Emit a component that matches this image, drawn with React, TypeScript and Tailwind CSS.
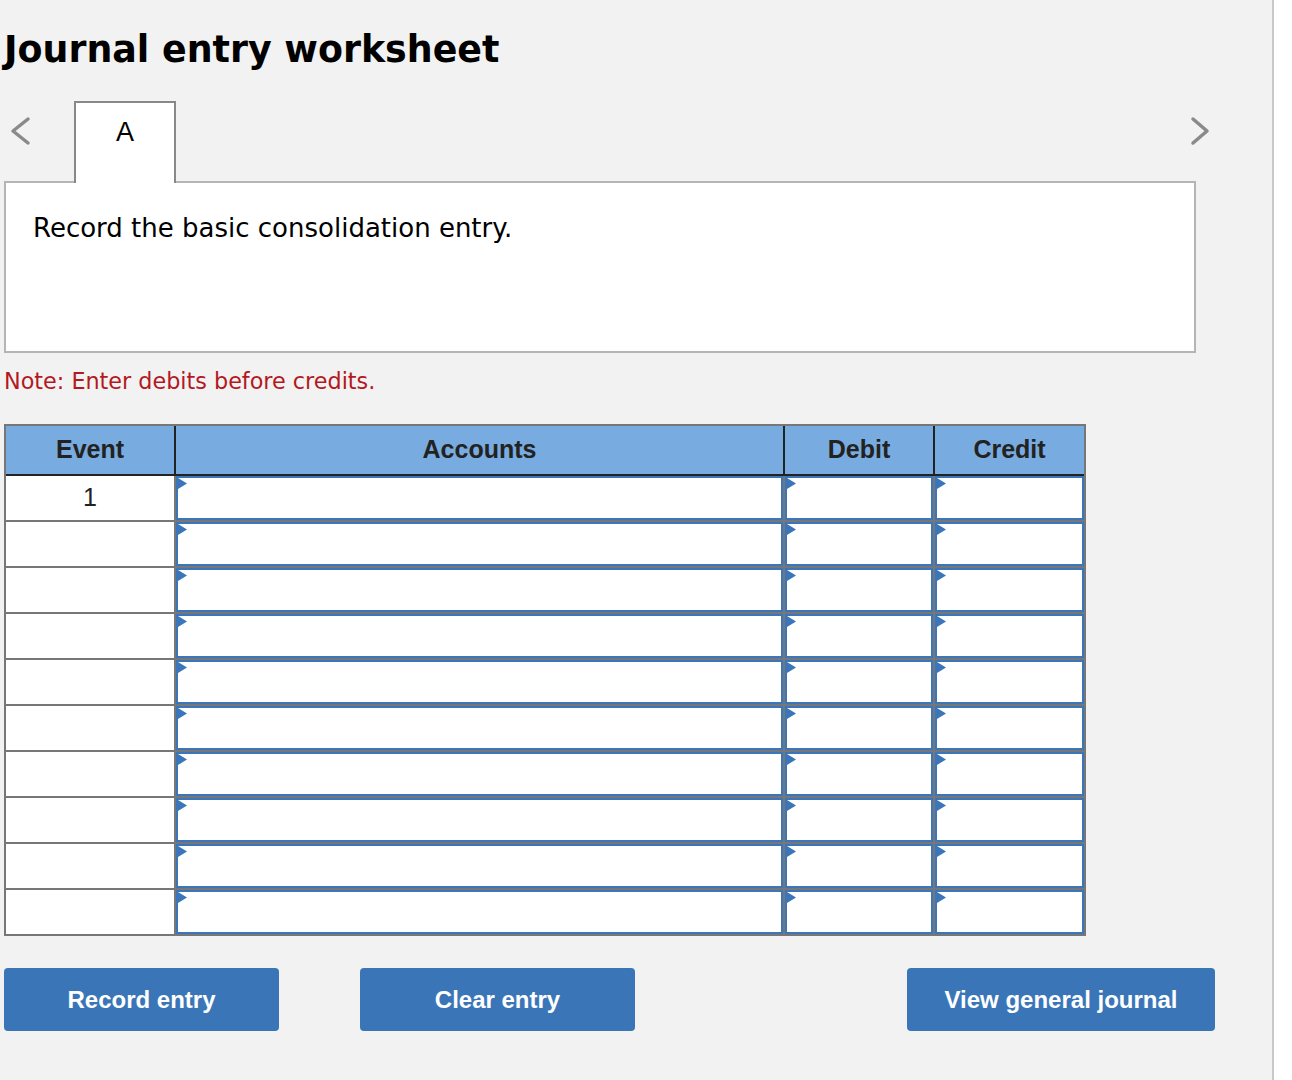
const verdana = "font-['Verdana','DejaVu_Sans',sans-serif]";
const arial = "font-['Liberation_Sans','Arial',sans-serif]";

const ROWS = 10;

function Flag() {
  return (
    <svg className="absolute left-0 top-0" width="9" height="11" viewBox="0 0 9 11">
      <polygon points="0,0 9,5.5 0,11" fill="#3a76b9" />
    </svg>
  );
}

function InputCell({ width, last }: { width: string; last?: boolean }) {
  return (
    <div className={`${width} h-full ${last ? "" : "border-r-2 border-[#777]"}`}>
      <div className="relative h-full w-full border-2 border-[#3a76b9] bg-white">
        <Flag />
      </div>
    </div>
  );
}

export default function App() {
  return (
    <div className="flex min-h-[1080px] w-full bg-white">
      <div className="w-[1274px] shrink-0 border-r-2 border-[#c8c8c8] bg-[#f2f2f2] pl-[4px] pt-[29px]">
        <h1 className={`${verdana} text-[36.4px] leading-[42px] font-bold text-black`}>
          Journal entry worksheet
        </h1>

        {/* tabs */}
        <div className="mt-[30px] flex h-[82px] w-[1210px] items-start">
          <div className="h-[82px] w-[70px]">
            <svg width="70" height="82" viewBox="0 0 70 82">
              <polyline
                points="24,18 9,30 24,42"
                fill="none"
                stroke="#8a8a8a"
                strokeWidth="3.5"
                strokeLinecap="round"
                strokeLinejoin="round"
              />
            </svg>
          </div>
          <div className="relative z-10 h-[82px] w-[102px] border-2 border-b-0 border-[#888] bg-white pt-[14px] text-center">
            <span className={`${arial} text-[27px] leading-[31px] text-black`}>A</span>
          </div>
          <div className="ml-auto h-[82px] w-[24px]">
            <svg width="24" height="82" viewBox="0 0 24 82">
              <polyline
                points="3,18 17,30 3,42"
                fill="none"
                stroke="#8a8a8a"
                strokeWidth="3.5"
                strokeLinecap="round"
                strokeLinejoin="round"
              />
            </svg>
          </div>
        </div>

        <div className="mt-[-2px] h-[172px] w-[1192px] border-2 border-[#b5b5b5] bg-white pl-[27px] pt-[30px]">
          <p className={`${verdana} text-[26px] leading-[30px] text-black`}>
            Record the basic consolidation entry.
          </p>
        </div>

        <p className={`${verdana} mt-[15px] text-[22.3px] leading-[26px] text-[#b3191f]`}>
          Note: Enter debits before credits.
        </p>

        {/* table */}
        <div className={`${arial} mt-[30px] w-[1082px] border-2 border-[#777] text-[#222]`}>
          <div className="flex h-[50px] border-b-2 border-[#222] bg-[#78abdf] text-[25px] font-bold">
            <div className="flex w-[170px] items-center justify-center border-r-2 border-[#222]">Event</div>
            <div className="flex w-[609px] items-center justify-center border-r-2 border-[#222]">Accounts</div>
            <div className="flex w-[150px] items-center justify-center border-r-2 border-[#222]">Debit</div>
            <div className="flex w-[149px] items-center justify-center">Credit</div>
          </div>
          {Array.from({ length: ROWS }).map((_, i) => (
            <div
              key={i}
              className={i < ROWS - 1 ? "flex h-[46px] border-b-2 border-[#777]" : "flex h-[44px]"}
            >
              <div className="flex w-[170px] items-center justify-center border-r-2 border-[#777] bg-white text-[25px]">
                {i === 0 ? "1" : ""}
              </div>
              <InputCell width="w-[609px]" />
              <InputCell width="w-[150px]" />
              <InputCell width="w-[149px]" last />
            </div>
          ))}
        </div>

        {/* buttons */}
        <div className={`${arial} mt-[32px] flex text-[24px] font-bold text-white`}>
          <button className="h-[63px] w-[275px] rounded-[4px] bg-[#3a76b7]">Record entry</button>
          <button className="ml-[81px] h-[63px] w-[275px] rounded-[4px] bg-[#3a76b7]">Clear entry</button>
          <button className="ml-[272px] h-[63px] w-[308px] rounded-[4px] bg-[#3a76b7]">View general journal</button>
        </div>
      </div>
    </div>
  );
}
